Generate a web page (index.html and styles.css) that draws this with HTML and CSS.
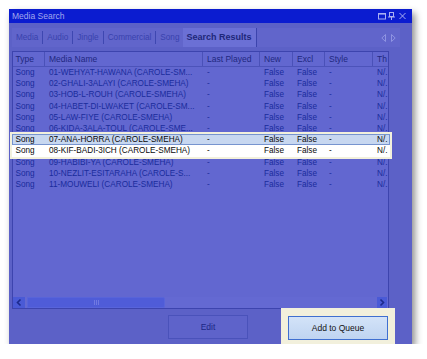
FILE: index.html
```html
<!DOCTYPE html>
<html>
<head>
<meta charset="utf-8">
<link rel="stylesheet" href="styles.css">
</head>
<body>
<div class="window">
  <div class="titlebar">
    <span class="title">Media Search</span>
    <svg class="tb-icons" width="29" height="8" viewBox="0 0 29 8">
      <rect x="0.5" y="1.5" width="7" height="5.5" fill="none" stroke="#a9aff2" stroke-width="1"/>
      <line x1="0.5" y1="2" x2="7.5" y2="2" stroke="#a9aff2" stroke-width="1.2"/>
      <rect x="11.5" y="0.5" width="4" height="4" fill="none" stroke="#a9aff2" stroke-width="1"/>
      <line x1="10" y1="5" x2="17" y2="5" stroke="#a9aff2" stroke-width="1"/>
      <line x1="13.5" y1="5" x2="13.5" y2="8" stroke="#a9aff2" stroke-width="1"/>
      <line x1="21.5" y1="1" x2="27.5" y2="7" stroke="#a9aff2" stroke-width="1"/>
      <line x1="27.5" y1="1" x2="21.5" y2="7" stroke="#a9aff2" stroke-width="1"/>
    </svg>
  </div>
  <div class="tabstrip">
    <span class="tab first">Media</span><span class="sep"></span>
    <span class="tab">Audio</span><span class="sep"></span>
    <span class="tab">Jingle</span><span class="sep"></span>
    <span class="tab">Commercial</span><span class="sep"></span>
    <span class="tab">Song</span>
    <span class="tab sel">Search Results</span>
    <svg class="tab-arrows" width="16" height="8" viewBox="0 0 16 8">
      <polygon points="4.5,0.5 0.8,4 4.5,7.5" fill="none" stroke="#8f94e2" stroke-width="1"/>
      <polygon points="10.5,0.5 14.2,4 10.5,7.5" fill="none" stroke="#8f94e2" stroke-width="1"/>
    </svg>
  </div>
  <div class="grid">
    <div class="row hdr">
      <span class="c c1">Type</span><span class="c c2">Media Name</span><span class="c c3">Last Played</span><span class="c c4">New</span><span class="c c5">Excl</span><span class="c c6">Style</span><span class="c c7">Th</span>
    </div>
    <div class="row"><span class="c c1">Song</span><span class="c c2">01-WEHYAT-HAWANA (CAROLE-SM...</span><span class="c c3">-</span><span class="c c4">False</span><span class="c c5">False</span><span class="c c6">-</span><span class="c c7">N/.</span></div>
    <div class="row"><span class="c c1">Song</span><span class="c c2">02-GHALI-3ALAYI (CAROLE-SMEHA)</span><span class="c c3">-</span><span class="c c4">False</span><span class="c c5">False</span><span class="c c6">-</span><span class="c c7">N/.</span></div>
    <div class="row"><span class="c c1">Song</span><span class="c c2">03-HOB-L-ROUH (CAROLE-SMEHA)</span><span class="c c3">-</span><span class="c c4">False</span><span class="c c5">False</span><span class="c c6">-</span><span class="c c7">N/.</span></div>
    <div class="row"><span class="c c1">Song</span><span class="c c2">04-HABET-DI-LWAKET (CAROLE-SM...</span><span class="c c3">-</span><span class="c c4">False</span><span class="c c5">False</span><span class="c c6">-</span><span class="c c7">N/.</span></div>
    <div class="row"><span class="c c1">Song</span><span class="c c2">05-LAW-FIYE (CAROLE-SMEHA)</span><span class="c c3">-</span><span class="c c4">False</span><span class="c c5">False</span><span class="c c6">-</span><span class="c c7">N/.</span></div>
    <div class="row"><span class="c c1">Song</span><span class="c c2">06-KIDA-3ALA-TOUL (CAROLE-SME...</span><span class="c c3">-</span><span class="c c4">False</span><span class="c c5">False</span><span class="c c6">-</span><span class="c c7">N/.</span></div>
    <div class="spot">
      <div class="row sel"><span class="c c1">Song</span><span class="c c2">07-ANA-HORRA (CAROLE-SMEHA)</span><span class="c c3">-</span><span class="c c4">False</span><span class="c c5">False</span><span class="c c6">-</span><span class="c c7">N/.</span></div>
      <div class="row"><span class="c c1">Song</span><span class="c c2">08-KIF-BADI-3ICH (CAROLE-SMEHA)</span><span class="c c3">-</span><span class="c c4">False</span><span class="c c5">False</span><span class="c c6">-</span><span class="c c7">N/.</span></div>
    </div>
    <div class="row"><span class="c c1">Song</span><span class="c c2">09-HABIBI-YA (CAROLE-SMEHA)</span><span class="c c3">-</span><span class="c c4">False</span><span class="c c5">False</span><span class="c c6">-</span><span class="c c7">N/.</span></div>
    <div class="row"><span class="c c1">Song</span><span class="c c2">10-NEZLIT-ESITARAHA (CAROLE-S...</span><span class="c c3">-</span><span class="c c4">False</span><span class="c c5">False</span><span class="c c6">-</span><span class="c c7">N/.</span></div>
    <div class="row"><span class="c c1">Song</span><span class="c c2">11-MOUWELI (CAROLE-SMEHA)</span><span class="c c3">-</span><span class="c c4">False</span><span class="c c5">False</span><span class="c c6">-</span><span class="c c7">N/.</span></div>
    <div class="filler"></div>
    <div class="hscroll">
      <span class="sb-btn"><svg width="12" height="11" viewBox="0 0 12 11"><polyline points="7.5,2.5 4.5,5.5 7.5,8.5" fill="none" stroke="#1c2a8c" stroke-width="1.6"/></svg></span>
      <span class="thumb"><span class="grip"></span></span>
      <span class="sb-btn right"><svg width="10" height="11" viewBox="0 0 10 11"><polyline points="3.5,2.5 6.5,5.5 3.5,8.5" fill="none" stroke="#1c2a8c" stroke-width="1.6"/></svg></span>
    </div>
  </div>
  <div class="buttons">
    <div class="btn edit">Edit</div>
    <div class="spot2"><div class="btn add">Add to Queue</div></div>
  </div>
</div>
</body>
</html>
```

FILE: styles.css
```css
body {
  margin: 0;
  background: #ffffff;
  font-family: "Liberation Sans", Arial, sans-serif;
  font-size: 8.2px;
}

.window {
  margin: 9px 0 0 9px;
  width: 403px;
  height: 335px;
  background: #5c61c7;
  box-shadow: 3px 4px 7px rgba(0, 0, 0, 0.45);
  display: flex;
  flex-direction: column;
}

.titlebar {
  height: 14px;
  flex: none;
  background: #0b1cd0;
  display: flex;
  align-items: center;
  padding-left: 3px;
  color: #a2a8ee;
  font-size: 8.5px;
}

.tb-icons {
  margin-left: auto;
  margin-right: 5px;
}

.tabstrip {
  margin: 5px 12px 0 3px;
  height: 19px;
  flex: none;
  background: #6165cb;
  display: flex;
  align-items: center;
}

.tab {
  padding: 0 4px;
  color: #3942ad;
  line-height: 19px;
  white-space: nowrap;
}

.sep {
  width: 1px;
  height: 13px;
  background: #3e47b1;
}

.tab.sel {
  background: #6b70d5;
  font-weight: bold;
  font-size: 9px;
  color: #1e2779;
  padding: 0 4px 0 3px;
  border-right: 1px solid #3c44ad;
  height: 19px;
}

.tab-arrows {
  margin-left: auto;
  margin-right: 3px;
}

.grid {
  margin: 4px 0 0 3px;
  width: 377px;
  height: 258px;
  flex: none;
  box-sizing: border-box;
  border: 1px solid #3d44ae;
  background: #6267d0;
  display: flex;
  flex-direction: column;
}

.row {
  display: flex;
  flex: none;
  height: 11.2px;
  line-height: 11.2px;
  color: #1a2c9c;
  white-space: pre;
  box-sizing: border-box;
}

.c {
  flex: none;
  overflow: hidden;
  padding-left: 4px;
  box-sizing: border-box;
}

.c1 { width: 32px; padding-left: 2.5px; }
.c2 { width: 158px; }
.c3 { width: 57px; }
.c4 { width: 33px; }
.c5 { width: 32px; }
.c6 { width: 48px; }
.c7 { flex: 1; min-width: 0; }

.row.hdr {
  height: 15px;
  line-height: 14px;
  border-bottom: 1px solid #4c53ba;
  color: #1f2780;
  font-size: 8.5px;
}

.hdr .c {
  border-right: 1px solid #4a51b8;
}

.hdr .c7 {
  border-right: none;
}

.spot {
  position: relative;
  z-index: 1;
  flex: none;
  margin: -2px -4px -2px -3px;
  padding: 2px;
  background: #f2f0dc;
  display: flex;
  flex-direction: column;
}

.spot .row {
  color: #0a0a0a;
  background: #ffffff;
  border-left: 1px solid #ffffff;
  border-right: 1px solid #ffffff;
}

.spot .row.sel {
  background: #c7d7f0;
  border: 1px solid #7694cf;
  line-height: 9.2px;
}

.filler {
  flex: 1;
}

.hscroll {
  flex: none;
  height: 11px;
  display: flex;
  background: #6469d2;
}

.sb-btn {
  width: 12px;
  background: #4a5ad6;
  display: flex;
}

.sb-btn.right {
  width: 10px;
  margin-left: auto;
  margin-right: 1px;
}

.thumb {
  width: 138px;
  margin-left: 2px;
  background: #4f5cd8;
  border: 1px solid #5864da;
  border-radius: 0 2px 2px 0;
  box-sizing: border-box;
  display: flex;
  align-items: center;
  justify-content: center;
}

.grip {
  width: 5px;
  height: 5px;
  background: repeating-linear-gradient(90deg, #7079e2 0 1px, transparent 1px 2px);
}

.buttons {
  flex: none;
  margin-top: -1px;
  height: 36px;
  display: flex;
  justify-content: flex-end;
  padding-right: 17px;
}

.btn {
  height: 24px;
  box-sizing: border-box;
  display: flex;
  align-items: center;
  justify-content: center;
  font-size: 8.5px;
}

.btn.edit {
  width: 80px;
  margin-top: 7px;
  margin-right: 33px;
  border: 1px solid #4a52ba;
  background: #5e63ca;
  color: #1c2786;
}

.spot2 {
  width: 114px;
  height: 36px;
  box-sizing: border-box;
  background: #f2f0dc;
  padding: 8px 7px 4px;
}

.btn.add {
  width: 100px;
  border: 1px solid #3f6fd0;
  background: linear-gradient(#d3e3f8, #bfd4f1);
  color: #111111;
}
```
